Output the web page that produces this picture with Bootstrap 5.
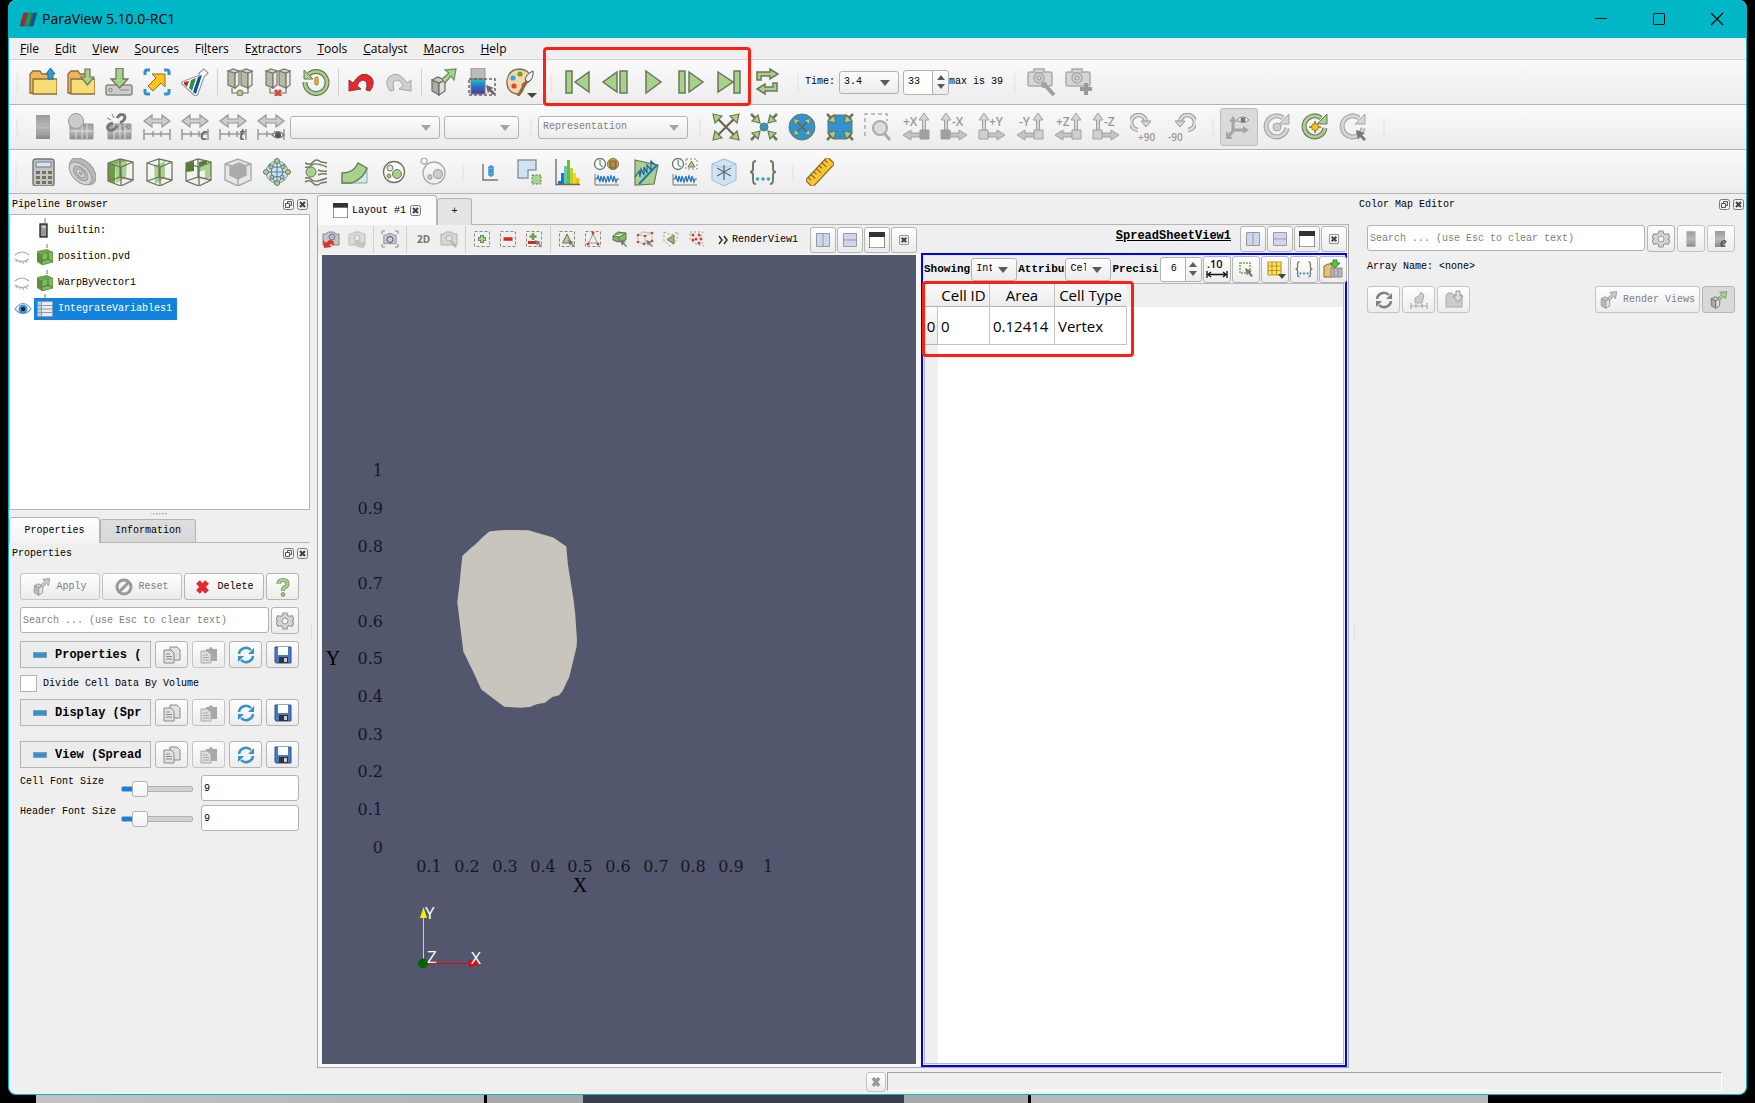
<!DOCTYPE html>
<html lang="en">
<head>
<meta charset="utf-8">
<meta name="viewport" content="width=device-width, initial-scale=1">
<title>ParaView 5.10.0-RC1</title>
<link rel="stylesheet" href="https://cdn.jsdelivr.net/npm/bootstrap@5.3.0/dist/css/bootstrap.min.css">
<style>
:root{--face:#efefef;--line:#b4b4b4;--cyan:#00b7c7}
body{font:10px/14px "Liberation Mono",monospace;color:#000;background:#000;overflow:hidden}
button,input,select{font:inherit;color:inherit}
.desk{height:100vh;padding:0 8px 8px;background:
 linear-gradient(90deg,#000 36px,#c2c2c2 36px,#b4b4b4 484px,#000 484px,#000 487px,#a8a8a8 487px,#a8a8a8 583px,#3b3c4e 583px,#3b3c4e 904px,#a9a9a9 904px,#a9a9a9 1028px,#000 1028px,#000 1031px,#b9b9b9 1031px,#b9b9b9 1488px,#000 1488px) bottom/100% 8px no-repeat #000}
.win{height:100%;background:var(--face);border:1px solid var(--cyan);border-top:0;border-radius:8px;overflow:hidden}
.titlebar{height:38px;background:var(--cyan);font:14px/20px "Open Sans",sans-serif;padding-left:10px;flex:none}
.capbtn{width:58px;height:38px;border:0;background:none;padding:0}
.menus{height:22px;flex:none;border-bottom:1px solid #d3d3d3;font:12px/20px "Open Sans",sans-serif;padding-left:3px}
.menus a{color:#000;text-decoration:none;padding:0 8px}
.bar{height:45px;flex:none;background:linear-gradient(#fafafa,#ececec);border-bottom:1px solid var(--line);padding-left:1px}
.bar.last{height:44px;padding-left:0}
.grp{display:flex;align-items:center;margin-right:5px;position:relative;flex:none}
.last .grp{margin-right:4px}
.grip{width:14px;height:18px;flex:none;background:radial-gradient(circle,#bbb 0 1px,transparent 1px) center/3px 3px;background-clip:content-box;padding:0 5px}
.tb{width:38px;height:38px;padding:0;border:1px solid transparent;background:none;border-radius:3px;display:flex;align-items:center;justify-content:center;flex:none}
.last .tb{width:39px}
.tb.down{background:#dadada;border-color:#bdbdbd}
.tb svg{width:28px;height:28px}
.vsep{width:7px;height:27px;flex:none;background:linear-gradient(#cfcfcf,#cfcfcf) center/1px 100% no-repeat}
svg{display:block;overflow:visible;flex:none}
.redbox{position:absolute;border:3px solid #ff2014;border-radius:4px;pointer-events:none;z-index:5}
.redbox.play{left:-1px;top:-16px;width:208px;height:59px}
.redbox.cells{left:-1px;top:26px;width:212px;height:76px}
.combo{appearance:none;height:23px;border:1px solid #b2b2b2;border-radius:3px;padding:0 24px 0 4px;line-height:20px;flex:none;background:linear-gradient(#fdfdfd,#ececec)}
.combox{position:relative;flex:none;display:flex}
.combox::after{content:"";position:absolute;right:9px;top:9px;border:5px solid transparent;border-top:6px solid #5a5a5a;border-bottom:0;pointer-events:none}
.combox.off::after{border-top-color:#a5a5a5}
.combo:disabled{color:#808080;opacity:1}
.w150{width:150px}.w75{width:75px}.w60{width:60px}.w46{width:46px}
.spin{position:relative;display:flex;flex:none;border:1px solid #b2b2b2;border-radius:3px;background:#fff;height:25px}
.spin input{width:28px;border:0;background:none;padding:0 4px;outline:0;border-radius:0}
.spin input.w24{width:24px;padding:0 0 0 10px}
.spin span{width:16px;border-left:1px solid #b2b2b2;background:linear-gradient(#fdfdfd,#ececec);border-radius:0 3px 3px 0;display:flex;flex-direction:column;align-items:center;justify-content:center;gap:4px}
.spin i{border:4px solid transparent;border-top:0;border-bottom:5px solid #5a5a5a}
.spin i+i{border-bottom:0;border-top:5px solid #5a5a5a}
.dock-l{width:308px;flex:none;padding-right:7px;position:relative}
.dock-r{width:397px;flex:none;padding-left:7px;position:relative}
.docktitle{height:20px;padding-left:3px;padding-right:2px;flex:none}
.docktitle>span:first-child{padding-top:2px}
.docktitle .ms-auto{display:flex;gap:3px}
.mini{padding:0;border:0;background:none;width:11px;height:11px}
.mini svg{width:11px;height:11px}
.tree{height:296px;flex:none;background:#fff;border:1px solid var(--line);margin:0;list-style:none;padding:3px 0 0;}
.tree li{height:26px;display:flex;align-items:center}
.tree .eye{width:24px;padding-left:4px}
.tree .lab{display:flex;align-items:center;height:22px;padding:0 5px 0 3px;gap:5px}
.tree .lab svg{width:16px;height:16px}
.tree .sel{background:#1283dd;color:#fff}
.hsplit{height:7px;flex:none;background:radial-gradient(circle,#bbb 0 1px,transparent 1px) center/3px 7px;background-clip:content-box;padding:0 142px}
.vsplit{position:absolute;top:430px;width:3px;height:16px;background:radial-gradient(circle,#bbb 0 1px,transparent 1px) center/3px 3px}
.tabs{height:26px;border-bottom:1px solid var(--line);display:flex;align-items:flex-end;flex:none}
.tabs.doc{height:31px;border-bottom:0;background:linear-gradient(var(--line),var(--line)) bottom/100% 1px no-repeat}
.tabx{border:1px solid var(--line);border-bottom:0;background:linear-gradient(#dedede,#d8d8d8);height:23px;width:96px;padding:0;border-radius:3px 3px 0 0}
.tabx.on{background:linear-gradient(#fff,#f3f3f3);height:26px;width:91px;margin-bottom:-1px}
.doc .tabx{height:27px;width:35px;background:#e4e4e4}
.doc .tabx.on{height:30px;width:120px;margin:0;background:#fbfbfb;display:flex;align-items:center;justify-content:center;gap:4px}
.props{padding:10px 11px 0;display:flex;flex-direction:column;gap:7px}
.pb{height:27px;border:1px solid #b5b5b5;border-radius:3px;background:linear-gradient(#fefefe,#ececec);padding:0;display:flex;align-items:center;justify-content:center;gap:5px;flex:none}
.pb:disabled{color:#808080;border-color:#c4c4c4}
.pb svg{width:18px;height:18px}
.w80{width:80px}.w33{width:33px}.w28{width:28px}.w25{width:26px;height:26px}.w105{width:105px}
.pb.down{background:#d9d9d9}
.blueic{color:#3593c6}.greyic{color:#a0a0a0}
.box{height:26px;border:1px solid #b2b2b2;border-radius:3px;background:#fff;padding:0 2px;outline:0;min-width:0}
.box::placeholder{color:#808080;opacity:1}
.head{width:131px;height:27px;border:1px solid #b5b5b5;background:#ececec;padding:0 0 0 12px;display:flex;align-items:center;gap:8px;font:bold 12px/16px "Liberation Mono",monospace;white-space:nowrap;flex:none}
.head svg{width:14px;height:6px}
.prow{display:flex;justify-content:space-between}
.prow.g2{gap:2px}
.tick{appearance:none;width:17px;height:17px;border:1px solid #b2b2b2;background:#fff;margin:0 6px 0 0}
.lbl{width:101px}
.slide{appearance:none;width:72px;height:17px;background:none;margin:5px 0 0}
.slide::-webkit-slider-runnable-track{height:6px;border:1px solid #b2b2b2;border-radius:2px;background:linear-gradient(90deg,#1283dd 12px,#d2d2d2 12px)}
.slide::-webkit-slider-thumb{appearance:none;width:16px;height:16px;margin-top:-6px;border:1px solid #b2b2b2;border-radius:3px;background:linear-gradient(#fff,#f2f2f2)}
.frame{border:1px solid #a8a8a8;border-top:0;background:#f8f8f8;min-height:0}
.viewbar{height:29px;background:var(--face);flex:none;padding-top:1px}
.ib{width:26px;height:26px;border:0;background:none;padding:0;display:flex;align-items:center;justify-content:center;flex:none}
.ib svg{width:18px;height:18px}
.viewbar .pb svg{width:16px;height:16px}
.viewbar .name{font-size:12px;line-height:20px;margin-right:9px}
.scene{background:#52576e;margin:1px 5px 3px 4px;min-height:0}
.scene svg{width:100%;height:100%}
.scene text{font:16px "DejaVu Serif",serif;fill:#16171d}
.scene .axt{font:20px "Liberation Serif",serif;fill:#000}
.scene .tri{font:17px "Open Sans",sans-serif;fill:#fff}
.sheet{width:426px;flex:none;margin-right:1px;min-height:0}
.sheet .viewbar{height:28px}
.blue{border:2px solid #00f;background:var(--face);padding:0 1px 1px;min-height:0;position:relative}
.sbar{height:28px;flex:none;gap:1px}
.sbar b{font-size:11px;flex:none}
.grid-area{border:1px solid #b9b9b9;background:linear-gradient(90deg,var(--face) 13px,#fff 13px);min-height:0}
.gridhead{background:linear-gradient(var(--face),var(--face)) top/100% 23px no-repeat}
.tbl{border-collapse:separate;border-spacing:0;font:15px/22px "Open Sans",sans-serif;background:#fff;table-layout:fixed;width:202px}
.tbl th{font-weight:400;height:23px;border-right:1px solid #c4c4c4;border-bottom:1px solid #b5b5b5;padding:0;text-align:center;background:linear-gradient(#fafafa,#ececec);white-space:nowrap}
.tbl thead th:first-child{border-right:0}
.tbl thead th:last-child{border-right-color:#efefef}
.tbl td{height:38px;border-right:1px solid #c4c4c4;border-bottom:1px solid #c4c4c4;padding:0 0 0 3px;white-space:nowrap}
.col0{width:13px}.col1{width:52px}.col2{width:65px}.col3{width:72px}
.status{height:26px;flex:none;padding:4px 24px 3px 857px}
.status .pb{width:20px;height:20px}
.status .field{border:1px solid #a2a2a2;border-right-color:#fff;border-bottom-color:#fff;margin-left:1px}
.cmap{padding:11px 11px 0}
.svgt{font-family:"Open Sans",sans-serif;font-weight:600;fill:#999}
.k{color:#a0a0a0}.kk{color:#d0d0d0}
.rs{fill:#a7d28b;stroke:#6f7558;stroke-width:1.5px}
</style>
</head>
<body>
<svg width="0" height="0" class="position-absolute" aria-hidden="true"><defs>
<linearGradient id="gg" x2="0" y2="1"><stop stop-color="#999"/><stop offset=".5" stop-color="#bbb"/><stop offset="1" stop-color="#888"/></linearGradient>
<linearGradient id="blu" x2="0" y2="1"><stop stop-color="#26c5c8"/><stop offset=".5" stop-color="#2273c4"/><stop offset="1" stop-color="#6a2f9e"/></linearGradient>
<symbol id="logo" viewBox="0 0 20 16"><path fill="#b5232f" stroke="#444" stroke-width=".6" d="M5 1h4L5 15H1z"/><path fill="#2c9a4b" stroke="#444" stroke-width=".6" d="M10 1h4l-4 14H6z"/><path fill="#11519b" stroke="#444" stroke-width=".6" d="M15 1h4l-4 14h-4z"/></symbol>
<symbol id="fold" viewBox="0 0 28 28"><g stroke="#8a6d3b" stroke-width="1.300"><path fill="#eeb560" d="M1 25V6l3-3h7l2 3h9v19z"/><path fill="#f6dd76" d="M4 11h24v15H4z"/></g></symbol>
<symbol id="open" viewBox="0 0 28 28"><use href="#fold"/><path fill="#3597d3" stroke="#1f6f9f" d="M21.500 0L26 6h-2v5h-5V6h-2z"/></symbol>
<symbol id="openg" viewBox="0 0 28 28"><use href="#fold"/><path fill="#a7d28b" stroke="#6f7558" stroke-width="1.200" d="M18 1h5v8h4l-6.500 8L14 9h4z"/></symbol>
<symbol id="save" viewBox="0 0 28 28"><rect x="1" y="17" width="26" height="10" rx="2" fill="#ccc" stroke="#888" stroke-width="1.500"/><circle cx="5.500" cy="22" r="1.500" fill="#fff" stroke="#666"/><path stroke="#888" d="M15 22h9"/><path fill="#a7d28b" stroke="#6f7558" stroke-width="1.300" d="M11 0h7v11h5l-8.500 9L6 11h5z"/></symbol>
<symbol id="extr" viewBox="0 0 28 28"><g fill="none" stroke="#2f93cf" stroke-width="3"><path d="M2 7V4q0-2 2-2h3M21 2h3q2 0 2 2v3M26 21v3q0 2-2 2h-3M7 26H4q-2 0-2-2v-3"/></g><path fill="#fcc419" stroke="#8a6d3b" d="M22 6v13l-4-4-8 8-5-5 8-8-4-4z"/></symbol>
<symbol id="flask" viewBox="0 0 28 28"><path fill="#fff" stroke="#999" stroke-width="1.200" d="M18 5l5-4 4 4-4 4-6 17q-2 3-4 1L1 16q-1-3 2-3l16-6z"/><path fill="#c1272d" d="M3 14l5-1-2 6-3-3z"/><path fill="#2b8f46" d="M10 12l5-2-4 13-3-3z"/><path fill="#11519b" d="M17 9l4-2-6 19-3-2z"/></symbol>
<symbol id="srv" viewBox="0 0 28 28"><g stroke="#77776a" stroke-width="1.200"><path fill="#b9b9aa" d="M2 3l7 2v15l-7-3zM15 3l7 2v15l-7-3z"/><path fill="#e8e8e4" d="M9 5l4-2v14l-4 3zM22 5l4-2v14l-4 3z"/><path fill="#d6d6cd" d="M2 3l5-2 6 2-4 2zM15 3l5-2 6 2-4 2z"/><path fill="none" d="M6 20v5h16v-5"/></g></symbol>
<symbol id="srvg" viewBox="0 0 28 28"><use href="#srv"/><circle cx="14" cy="25" r="3" fill="#a7d28b" stroke="#6f7558"/></symbol>
<symbol id="srvx" viewBox="0 0 28 28"><use href="#srv"/><path stroke="#d94a3c" stroke-width="3" d="M11 22l6 6M17 22l-6 6"/></symbol>
<symbol id="reset" viewBox="0 0 28 28"><path fill="none" stroke="#6f7558" stroke-width="5" d="M7 6a11 11 0 1 1-4 8"/><path fill="none" stroke="#a7d28b" stroke-width="2.600" d="M7 6a11 11 0 1 1-4 8"/><path fill="#a7d28b" stroke="#6f7558" d="M2 2v9h9z"/><rect x="13" y="9" width="3" height="8" rx="1.500" fill="#fcc419" stroke="#8a6d3b"/></symbol>
<symbol id="undo" viewBox="0 0 28 28"><path d="M2 12l4 3Q15 1 24 9q5 6-1 14l-4-1q3-9-3-10-4 0-6 6l4 3-12 2z"/></symbol>
<symbol id="cube" viewBox="0 0 28 28"><g stroke="#6b6b62" stroke-width="1.200"><path fill="#aaa" d="M2 12l7 3v12l-7-4z"/><path fill="#ddd" d="M9 15l6-3v11l-6 4z"/><path fill="#c8c8c8" d="M2 12l6-3 7 3-6 3z"/></g><path fill="#a7d28b" stroke="#6f8a58" stroke-width="1.200" d="M12 11l7-6-4-3 11-1-2 11-3-4-6 7z"/></symbol>
<symbol id="cubeg" viewBox="0 0 28 28"><g stroke="#999" stroke-width="1.400"><path fill="#bbb" d="M2 12l7 3v12l-7-4z"/><path fill="#e2e2e2" d="M9 15l6-3v11l-6 4z"/><path fill="#ccc" d="M2 12l6-3 7 3-6 3z"/><path fill="#ccc" d="M12 11l7-6-4-3 11-1-2 11-3-4-6 7z"/></g></symbol>
<symbol id="cbar" viewBox="0 0 28 28"><rect x="3" y="0" width="14" height="11" fill="#bbb" stroke="#999"/><path fill="url(#blu)" stroke="#777" d="M3 11h14v15H3z"/><path fill="none" stroke="#666" stroke-dasharray="3 2" stroke-width="1.500" d="M1 11h26v16H1z"/><path fill="#666" d="M18 17l8 3-3 1 4 4-2 2-4-4-1 3z"/></symbol>
<symbol id="pal" viewBox="0 0 28 28"><path fill="#f6d6a8" stroke="#77705c" stroke-width="1.300" d="M14 1q10 1 11 10-2 4-7 4-3 1-1 5 0 6-6 6Q0 24 1 12 3 1 14 1z"/><circle cx="14" cy="6" r="2.600" fill="#6aa13d"/><circle cx="7" cy="10" r="2.600" fill="#35a4dd"/><circle cx="8" cy="18" r="2.600" fill="#e8412d"/><path stroke="#8a6d3b" stroke-width="3" d="M21 13L12 28"/><path fill="#eee" stroke="#555" d="M27 3q1 8-5 11l-3-2q1-6 8-9z"/></symbol>
<symbol id="first" viewBox="0 0 28 28"><path d="M3 3h6v22H3zM26 4v20L12 14z"/></symbol>
<symbol id="prev" viewBox="0 0 28 28"><path d="M19 3h7v22h-7zM16 4v20L2 14z"/></symbol>
<symbol id="play" viewBox="0 0 28 28"><path d="M7 3l15 11L7 25z"/></symbol>
<symbol id="next" viewBox="0 0 28 28"><path d="M2 3h6v22H2zM12 4l14 10-14 10z"/></symbol>
<symbol id="last" viewBox="0 0 28 28"><path d="M19 3h6v22h-6zM3 4l15 10L3 24z"/></symbol>
<symbol id="loop" viewBox="0 0 28 28"><path d="M4 12V4h13V1l8 5-8 5V8H8v4zM24 15v8H12v3l-8-5 8-5v3h8v-4z"/></symbol>
<symbol id="cam" viewBox="0 0 28 28"><g fill="#d6d6d6" stroke="#aaa" stroke-width="1.500"><rect x="1" y="4" width="24" height="14" rx="2"/><path d="M7 4V1h10v3"/><circle cx="12" cy="10" r="5"/><circle cx="12" cy="10" r="2"/></g></symbol>
<symbol id="grad" viewBox="0 0 28 28"><path fill="url(#gg)" d="M7 2h14v24H7z"/><path stroke="#aaa" d="M7 9h14M7 13h14M7 17h14M7 21h14"/></symbol>
<symbol id="gradc" viewBox="0 0 28 28"><path fill="url(#gg)" stroke="#999" d="M3 11h23v15H3z"/><path stroke="#ddd" d="M9 11v15M15 11v15M20 11v15M3 18h23"/></symbol>
<symbol id="arr" viewBox="0 0 28 28"><path fill="#ccc" stroke="#999" stroke-width="1.200" d="M1 8l8-6v4h10V2l8 6-8 6v-4H9v4z"/><path stroke="#999" stroke-width="1.500" fill="none" d="M1 16v11M27 16v11M1 21h26M10 18v6M18 18v6"/></symbol>
<symbol id="fitx" viewBox="0 0 28 28"><path stroke="#666650" stroke-width="2.200" d="M4 4l20 20M24 4L4 24"/><path fill="#a7d28b" stroke="#6f7558" stroke-width="1.200" d="M1 1l9 2-7 7zM27 1l-9 2 7 7zM1 27l9-2-7-7zM27 27l-9-2 7-7z"/></symbol>
<symbol id="inar" viewBox="0 0 28 28"><path stroke="#6f7558" stroke-width="2.500" d="M1 1l5 5M27 1l-5 5M1 27l5-5M27 27l-5-5"/><path stroke="#6f7558" stroke-width="1.200" fill="#a7d28b" d="M10 10l-8-2 6-6zM18 10l8-2-6-6zM10 18l-8 2 6 6zM18 18l8 2-6 6z"/></symbol>
<symbol id="axL" viewBox="0 0 28 28"><path stroke="#a0a0a0" fill="#d6d6d6" d="M20.500 17V7H17l5-7 5 7h-3.500v10z"/><path stroke="#a0a0a0" fill="#c4c4c4" d="M18 20h-9v-3l-8 5 8 5v-3h9z"/><path fill="currentColor" stroke="#a0a0a0" d="M18 17h9v9h-9z"/></symbol>
<symbol id="axR" viewBox="0 0 28 28"><path stroke="#a0a0a0" fill="#d6d6d6" d="M4.500 17V7H1l5-7 5 7H7.500v10z"/><path stroke="#a0a0a0" fill="#c4c4c4" d="M10 20h9v-3l8 5-8 5v-3h-9z"/><path fill="currentColor" stroke="#a0a0a0" d="M1 17h9v9H1z"/></symbol>
<symbol id="rot" viewBox="0 0 28 28"><path fill="none" stroke="#999" stroke-width="4.500" d="M8 17A7.500 7.500 0 1 1 16 9"/><path fill="none" stroke="#ddd" stroke-width="2.400" d="M8 17A7.500 7.500 0 1 1 16 9"/><path fill="#d6d6d6" stroke="#999" d="M11 8h10l-5 6z"/></symbol>
<symbol id="circ" viewBox="0 0 28 28"><path fill="none" stroke="var(--o)" stroke-width="5" d="M24 15A10.500 10.500 0 1 1 20 5"/><path fill="var(--f)" stroke="var(--o)" d="M26 1v10H16z"/><path fill="none" stroke="var(--f)" stroke-width="2.800" d="M24 15A10.500 10.500 0 1 1 20 5"/></symbol>
<symbol id="calc" viewBox="0 0 28 28"><rect x="4" y="1" width="21" height="27" rx="3" fill="#c4c4c4" stroke="#777" stroke-width="1.500"/><path fill="#cfe5f5" stroke="#777" d="M7 4h15v5H7z"/><g fill="#6f7558"><path d="M7 13h4v3H7zM13 13h4v3h-4zM19 13h4v3h-4zM7 18h4v3H7zM13 18h4v3h-4zM19 18h4v3h-4zM7 23h4v3H7zM13 23h4v3h-4zM19 23h4v3h-4z"/></g></symbol>
<symbol id="cont" viewBox="0 0 28 28"><g transform="rotate(45 14 14)" stroke="#999" fill="#b8b8b8"><ellipse cx="14" cy="13" rx="16" ry="10"/><ellipse cx="14" cy="16" rx="14" ry="8" fill="#d2d2d2"/><ellipse cx="14" cy="16" rx="9" ry="5"/><ellipse cx="14" cy="16" rx="5" ry="3" fill="#ddd"/><ellipse cx="14" cy="16" rx="2" ry="1"/></g></symbol>
<symbol id="wire" viewBox="0 0 28 28"><path fill="none" stroke="#6f7558" stroke-width="1.300" d="M1 5l12-4 13 3v18l-12 6L1 23zM1 5l13 4 12-5M14 9v19M13 1v18L1 23M13 19l13 3"/></symbol>
<symbol id="clip" viewBox="0 0 28 28"><path fill="#6f9a45" d="M1 5l7 2v18l-7-2z"/><path fill="#a7d28b" d="M8 7l12-4-1 17-10 5z"/><path fill="#8ab763" d="M1 5l12-4 7 2L8 7z"/><use href="#wire"/></symbol>
<symbol id="slice" viewBox="0 0 28 28"><path fill="#a7d28b" d="M8 8l11-5v17L9 26z"/><use href="#wire"/></symbol>
<symbol id="thr" viewBox="0 0 28 28"><path fill="#527d2e" d="M1 5l8-2v10l-8 1zM14 4l8-2v6h-8z"/><path fill="#a7d28b" d="M13 9l13-5v15l-6 2v-9l-7 2z"/><use href="#wire"/></symbol>
<symbol id="sub" viewBox="0 0 28 28"><g stroke="#aaa" stroke-width="1.400"><path fill="#e6e6e6" d="M1 6l13-5 13 5v16l-13 6-13-6z"/><path fill="none" d="M1 6l13 4 13-4M14 10v18"/><path fill="#aaa" d="M6 9l9-4 7 3v9l-8 4-8-4z"/></g></symbol>
<symbol id="glyph" viewBox="0 0 28 28"><circle cx="14" cy="14" r="11" fill="#cfe3f3" stroke="#6d93b5"/><path fill="none" stroke="#4d7898" d="M2 14h24M14 2v24M6 6q8 7 16 0M6 22q8-7 16 0M8 14q1-8 6-12 5 4 6 12-1 8-6 12-5-4-6-12"/><g fill="#a7d28b" stroke="#6f7558"><circle cx="14" cy="3" r="2.500"/><circle cx="14" cy="25" r="2.500"/><circle cx="3" cy="14" r="2.500"/><circle cx="25" cy="14" r="2.500"/><circle cx="8" cy="9" r="2"/><circle cx="20" cy="9" r="2"/><circle cx="9" cy="19" r="2"/><circle cx="19" cy="19" r="2"/></g></symbol>
<symbol id="stream" viewBox="0 0 28 28"><path fill="none" stroke="#77776a" stroke-width="1.500" d="M3 5q5 3 8-1t8 0l6 1M3 9q4 1 7-2t15 2M3 20q4-1 7 2t15-2M3 24q5-3 8 1t8 0l6-1M16 12q4 2 9 1M16 17q4-2 9-1"/><circle cx="9" cy="14" r="5" fill="#a7d28b" stroke="#6f7558"/></symbol>
<symbol id="warp" viewBox="0 0 28 28"><path fill="#cfe9e4" stroke="#8aa" d="M1 17l25-7v15H1z"/><path fill="#a7d28b" stroke="#6f7558" stroke-width="1.300" d="M1 15q12 0 16-10l9 5q-3 10-15 15H1z"/></symbol>
<symbol id="group" viewBox="0 0 28 28"><circle cx="14" cy="14" r="10.500" fill="#fff" stroke="#6f7558" stroke-width="1.300"/><circle cx="10" cy="10" r="3" fill="#cfe9e4" stroke="#6f7558"/><circle cx="17" cy="16" r="4.500" fill="#a7d28b" stroke="#6f7558"/><circle cx="9" cy="18" r="2" fill="#a7d28b" stroke="#6f7558"/></symbol>
<symbol id="ext1" viewBox="0 0 28 28"><g fill="none" stroke="#aaa" stroke-width="1.300"><circle cx="15" cy="15" r="11"/><circle cx="5" cy="3" r="3"/><circle cx="19" cy="16" r="4.500" fill="#ccc"/><circle cx="11" cy="19" r="2" fill="#ccc"/></g></symbol>
<symbol id="box1" viewBox="0 0 28 28"><path fill="none" stroke="#777" stroke-width="1.400" d="M7 6v16h15"/><path fill="none" stroke="#2f8fd0" stroke-width="1.400" d="M15 7v12M13 9h4v8h-4zM13 12h4M13 14h4"/></symbol>
<symbol id="box2" viewBox="0 0 28 28"><path fill="#cfe3f3" stroke="#8a9aa5" stroke-width="1.500" d="M3 2h18v10h-8v8H3z"/><path fill="#a7d28b" stroke="#6f7558" stroke-dasharray="2 1.500" d="M17 17h9v9h-9z"/></symbol>
<symbol id="hist" viewBox="0 0 28 28"><path fill="#1878d0" d="M4 23h3v3H4zM7 15h3v11H7z"/><path fill="#62c6b8" d="M10 8h3v18h-3z"/><path fill="#6abf2b" d="M13 2h3v24h-3z"/><path fill="#b5d334" d="M16 10h3v16h-3z"/><path fill="#ffd60a" d="M19 15h3v11h-3z"/><path fill="#ffb50a" d="M22 20h3v6h-3z"/><path fill="none" stroke="#666" stroke-width="1.300" d="M2 1v25.500h24"/></symbol>
<symbol id="wave" viewBox="0 0 28 28"><path fill="none" stroke="#777" d="M2 16v11h24"/><path fill="none" stroke="#1d74bd" stroke-width="1.200" d="M2 21h2l1-3 2 6 1-6 2 6 1-6 2 6 2-6 1 6 2-6 2 6 1-6 2 6 1-3h2"/></symbol>
<symbol id="clk" viewBox="0 0 28 28"><circle cx="7" cy="6" r="5.500" fill="#fff" stroke="#6f7558" stroke-width="1.300"/><path fill="none" stroke="#1d74bd" d="M7 2v5l3 2"/></symbol>
<symbol id="plotl" viewBox="0 0 28 28"><path fill="#a7d28b" stroke="#6f7558" stroke-width="1.200" d="M3 2l23 5-4 19-19 1z"/><path stroke="#1d74bd" stroke-width="2" d="M7 26L25 7"/><path fill="none" stroke="#1a5fa5" stroke-width="1.200" d="M3 19l4-6 1 6 1-8 3 6 0-8 3 6 0-8 4 5V3l4 4"/></symbol>
<symbol id="hex" viewBox="0 0 28 28"><path fill="#cfe5f5" stroke="#a9c4d8" stroke-width="1.200" d="M2 6l12-5 12 5v16l-12 6-12-6z"/><path fill="none" stroke="#a9c4d8" d="M2 6l12 4 12-4"/><path stroke="#5a6a78" stroke-width="1.300" d="M14 7v15M7 10l14 8M21 10L7 18"/></symbol>
<symbol id="brace" viewBox="0 0 28 28"><path fill="none" stroke="#77776a" stroke-width="2" d="M7 3Q4 3 4 6v5q0 3-3 3 3 0 3 3v5q0 4 3 4M21 3q3 0 3 3v5q0 3 3 3-3 0-3 3v5q0 4-3 4"/><g fill="#3fa0d0"><circle cx="8.500" cy="21" r="1.800"/><circle cx="14" cy="21" r="1.800"/><circle cx="19.500" cy="21" r="1.800"/></g></symbol>
<symbol id="ruler" viewBox="0 0 28 28"><g transform="rotate(-47 14 14)"><rect x="-2" y="9" width="32" height="10" rx="1" fill="#fcc62b" stroke="#8a6d3b" stroke-width="1.300"/><path stroke="#6b5a2b" d="M2 9v4M6 9v6M10 9v4M14 9v6M18 9v4M22 9v6M26 9v4"/></g></symbol>
<symbol id="fl" viewBox="0 0 11 11"><rect x=".5" y=".5" width="10" height="10" rx="2" fill="#f4f4f4" stroke="#777"/><path fill="none" stroke="#555" d="M4.500 4.500v-2h4v4h-2M2.500 4.500h4v4h-4z"/></symbol>
<symbol id="cl" viewBox="0 0 11 11"><rect x=".5" y=".5" width="10" height="10" rx="2" fill="#f4f4f4" stroke="#777"/><path stroke="#444" stroke-width="2.200" d="M3 3l5 5M8 3L3 8"/></symbol>
<symbol id="gcube" viewBox="0 0 16 16"><path fill="#5f8f40" d="M0 2l5 3v11l-5-3z"/><path fill="#7dbb5c" stroke="#4f7a38" stroke-width=".7" d="M5 5l11-2v10L5 16z"/><path fill="#69a34b" d="M0 2l10-2 6 3-11 2z"/><path fill="none" stroke="#487232" d="M11 4v6l5 3M11 10l-6 2"/></symbol>
<symbol id="shut" viewBox="0 0 16 14"><path fill="none" stroke="#aaa" stroke-width="1.200" d="M1 5q7-6 14 0M1 9q7 5 14 0M3 10l-1 2M6 11v2M9 11v3M12 11l1 2"/></symbol>
<symbol id="eyeo" viewBox="0 0 18 14"><path fill="#fff" stroke="#999" stroke-width="1.200" d="M1 7q8-11 16 0-8 9-16 0z"/><circle cx="9" cy="7" r="4.500" fill="#2c9be0"/><circle cx="9" cy="7" r="2.200" fill="#06223c"/></symbol>
<symbol id="minus" viewBox="0 0 14 6"><rect x=".5" y=".5" width="13" height="5" fill="#2f93cf" stroke="#8899aa"/></symbol>
<symbol id="doc2" viewBox="0 0 18 18"><g stroke="#888" fill="#dfe3df"><path d="M7 1h7l3 3v10H7z"/><path d="M1 4h7l3 3v10H1z"/><path d="M3 8h4M3 10.500h6M3 13h6"/></g></symbol>
<symbol id="paste" viewBox="0 0 18 18"><path fill="#a8a8a8" d="M6 3h3q2-4 4 0h4v12H6z"/><path fill="#ddd" stroke="#aaa" d="M1 5h6l4 3v9H1z"/><path stroke="#aaa" d="M3 9h5M3 11.500h6M3 14h6"/></symbol>
<symbol id="sync" viewBox="0 0 18 18"><path fill="none" stroke="currentColor" stroke-width="2.500" d="M2 8a7 7 0 0 1 12-4M16 10a7 7 0 0 1-12 4"/><path fill="currentColor" d="M17 2v6h-6zM1 16v-6h6z"/></symbol>
<symbol id="disk" viewBox="0 0 18 18"><path fill="#4a7bbd" stroke="#2d5288" d="M1 1h16v16H2l-1-1z"/><path fill="#fff" d="M4 1h10v8H4z"/><path fill="#333" d="M5 11h9v6H5z"/><path fill="#ccc" d="M10 12h3v4h-3z"/></symbol>
<symbol id="gear" viewBox="0 0 18 18"><path fill="#d4d4d4" stroke="#999" stroke-width="1.200" d="M7 1h4l.6 2.400 1.800 1L16 3.700l2 3.500L16.200 9l1.800 1.800-2 3.500-2.600-.7-1.800 1L11 17H7l-.6-2.400-1.800-1-2.600.7-2-3.500L1.800 9 0 7.200l2-3.500 2.600.7 1.800-1z"/><circle cx="9" cy="9" r="3" fill="#f2f2f2" stroke="#999"/></symbol>
<symbol id="dash" viewBox="0 0 18 18"><path fill="none" stroke="#8a8a7a" stroke-dasharray="3 2" d="M1.500 1.500h15v15h-15z"/></symbol>
<symbol id="cur" viewBox="0 0 18 18"><path fill="#777" d="M10 10l6 2-2 1 3 3-1 1-3-3-1 2z"/></symbol>
<symbol id="scam" viewBox="0 0 18 18"><path fill="#c6c6c6" stroke="#888" d="M1 4h3l2-2h6l2 2h3v11H1z"/></symbol>
<symbol id="spv" viewBox="0 0 16 16"><path fill="#ccd6ee" stroke="#9a9a9a" d="M1.500 1.500h13v13h-13zM8 1v14"/></symbol>
<symbol id="sph" viewBox="0 0 16 16"><path fill="#ccd6ee" stroke="#9a9a9a" d="M1.500 1.500h13v13h-13zM1 8h14"/></symbol>
<symbol id="maxi" viewBox="0 0 16 16"><path fill="#fff" stroke="#444" stroke-width="1.200" d="M0 0h16v16H0z"/><path fill="#333" d="M0 0h16v5H0z"/></symbol>
</defs></svg>

<div class="desk">
<div class="win d-flex flex-column">
 <header class="titlebar d-flex align-items-center">
  <svg width="19" height="15" class="me-1"><use href="#logo"/></svg><span>ParaView 5.10.0-RC1</span>
  <div class="ms-auto d-flex">
   <button class="capbtn" aria-label="Minimize"><svg width="12" height="12" class="mx-auto"><path stroke="#000" d="M0 5.500h12"/></svg></button>
   <button class="capbtn" aria-label="Maximize"><svg width="12" height="12" class="mx-auto"><rect x=".5" y=".5" width="11" height="11" rx="1" fill="none" stroke="#000"/></svg></button>
   <button class="capbtn" aria-label="Close"><svg width="12" height="12" class="mx-auto"><path stroke="#000" stroke-width="1.200" d="M0 0l12 12M12 0L0 12"/></svg></button>
  </div>
 </header>
 <nav class="menus d-flex align-items-center">
  <a href="#"><u>F</u>ile</a><a href="#"><u>E</u>dit</a><a href="#"><u>V</u>iew</a><a href="#"><u>S</u>ources</a><a href="#">Fi<u>l</u>ters</a><a href="#">E<u>x</u>tractors</a><a href="#"><u>T</u>ools</a><a href="#"><u>C</u>atalyst</a><a href="#"><u>M</u>acros</a><a href="#"><u>H</u>elp</a>
 </nav>

 <div class="bar d-flex align-items-center">
  <div class="grp"><span class="grip"></span>
   <button class="tb" aria-label="Open"><svg><use href="#open"/></svg></button>
   <button class="tb" aria-label="Load state"><svg><use href="#openg"/></svg></button>
   <button class="tb" aria-label="Save data"><svg><use href="#save"/></svg></button>
   <button class="tb" aria-label="Save extracts"><svg><use href="#extr"/></svg></button>
   <button class="tb" aria-label="Catalyst"><svg><use href="#flask"/></svg></button>
   <span class="vsep"></span>
   <button class="tb" aria-label="Connect"><svg><use href="#srvg"/></svg></button>
   <button class="tb" aria-label="Disconnect"><svg><use href="#srvx"/></svg></button>
   <button class="tb" aria-label="Reset session"><svg><use href="#reset"/></svg></button>
   <span class="vsep"></span>
   <button class="tb" aria-label="Undo"><svg fill="#e8262c" stroke="#8a3a3a"><use href="#undo"/></svg></button>
   <button class="tb" aria-label="Redo"><svg fill="#d0d0d0" stroke="#a5a5a5" viewBox="0 0 28 28"><g transform="matrix(-1 0 0 1 28 0)"><use href="#undo"/></g></svg></button>
   <span class="vsep"></span>
   <button class="tb" aria-label="Auto apply"><svg><use href="#cube"/></svg></button>
   <button class="tb" aria-label="Edit color map"><svg><use href="#cbar"/></svg></button>
   <button class="tb" aria-label="Palette"><svg viewBox="0 0 28 28"><use href="#pal"/><path fill="#444" d="M21 25h10l-5 5z"/></svg></button>
  </div>
  <div class="grp"><span class="grip"></span><span class="redbox play"></span>
   <button class="tb" aria-label="First frame"><svg class="rs"><use href="#first"/></svg></button>
   <button class="tb" aria-label="Previous frame"><svg class="rs"><use href="#prev"/></svg></button>
   <button class="tb" aria-label="Play"><svg class="rs"><use href="#play"/></svg></button>
   <button class="tb" aria-label="Next frame"><svg class="rs"><use href="#next"/></svg></button>
   <button class="tb" aria-label="Last frame"><svg class="rs"><use href="#last"/></svg></button>
   <button class="tb" aria-label="Loop"><svg class="rs"><use href="#loop"/></svg></button>
  </div>
  <div class="grp"><span class="grip"></span>
   <label for="time">Time:</label>
   <span class="combox ms-1"><select id="time" class="combo w60"><option>3.4</option></select></span>
   <span class="spin ms-1"><input id="step" type="text" inputmode="numeric" value="33"><span><i></i><i></i></span></span>
   <label for="step">max is 39</label>
  </div>
  <div class="grp"><span class="grip"></span>
   <button class="tb" aria-label="Adjust camera"><svg viewBox="0 0 28 28"><use href="#cam"/><path stroke="#a0a0a0" stroke-width="4" d="M17 16l10 11"/><circle cx="17" cy="17" r="3" fill="#a0a0a0"/></svg></button>
   <button class="tb" aria-label="Add camera link"><svg viewBox="0 0 28 28"><use href="#cam"/><path stroke="#999" stroke-width="4" d="M21 15v12M15 21h12"/></svg></button>
  </div>
 </div>

 <div class="bar d-flex align-items-center">
  <div class="grp"><span class="grip"></span>
   <button class="tb" aria-label="Color legend"><svg><use href="#grad"/></svg></button>
   <button class="tb" aria-label="Edit colors"><svg viewBox="0 0 28 28"><use href="#gradc"/><circle cx="9" cy="8" r="7.500" fill="#ccc" stroke="#999"/></svg></button>
   <button class="tb" aria-label="Separate colors"><svg viewBox="0 0 28 28"><use href="#gradc"/><path fill="none" stroke="#777" stroke-width="3" d="M12 13q-5 7-9 3-2-4 5-6M12 5q3-5 7-3 3 4-4 8"/><path stroke="#777" d="M7 1l2 4M2 5l4 2M20 13l4 3M17 14l1 4"/></svg></button>
   <button class="tb" aria-label="Rescale"><svg><use href="#arr"/></svg></button>
   <button class="tb" aria-label="Rescale custom"><svg viewBox="0 0 28 28"><use href="#arr"/><text x="19" y="27" font-size="16" font-style="italic" class="svgt" style="fill:#666">c</text></svg></button>
   <button class="tb" aria-label="Rescale temporal"><svg viewBox="0 0 28 28"><use href="#arr"/><text x="20" y="27" font-size="16" font-style="italic" class="svgt" style="fill:#666">t</text></svg></button>
   <button class="tb" aria-label="Rescale visible"><svg viewBox="0 0 28 28"><use href="#arr"/><path fill="#eee" stroke="#777" stroke-width="1.200" d="M15 22q6-7 12 0-6 6-12 0z"/><circle cx="21" cy="22" r="3" fill="#555"/></svg></button>
   <span class="combox off"><select class="combo w150" disabled aria-label="Array"><option></option></select></span>
   <span class="combox off ms-1"><select class="combo w75" disabled aria-label="Component"><option></option></select></span>
  </div>
  <div class="grp"><span class="grip"></span><span class="combox off"><select class="combo w150" disabled aria-label="Representation"><option>Representation</option></select></span></div>
  <div class="grp"><span class="grip"></span>
   <button class="tb" aria-label="Reset camera"><svg><use href="#fitx"/></svg></button>
   <button class="tb" aria-label="Zoom to data"><svg viewBox="0 0 28 28"><circle cx="14" cy="14" r="4" fill="#2f93d3" stroke="#6f7558"/><use href="#inar"/></svg></button>
   <button class="tb" aria-label="Reset closest"><svg viewBox="0 0 28 28"><circle cx="14" cy="14" r="13" fill="#2f93d3" stroke="#6f7558"/><use href="#fitx" x="5" y="5" width="18" height="18"/></svg></button>
   <button class="tb" aria-label="Zoom closest"><svg viewBox="0 0 28 28"><rect x="2" y="2" width="24" height="24" rx="7" fill="#2f93d3" stroke="#6f7558"/><use href="#inar"/></svg></button>
   <button class="tb" aria-label="Zoom to box"><svg viewBox="0 0 28 28"><path fill="none" stroke="#aaa" stroke-width="1.500" stroke-dasharray="4 3" d="M1 23V1h22v7"/><circle cx="16" cy="15" r="7" fill="#ddd" stroke="#aaa" stroke-width="2"/><path stroke="#aaa" stroke-width="3" d="M20 20l6 7"/></svg></button>
   <button class="tb" aria-label="+X"><svg class="k" viewBox="0 0 28 28"><use href="#axL"/><text x="1" y="13" font-size="12" class="svgt">+X</text></svg></button>
   <button class="tb" aria-label="-X"><svg class="k" viewBox="0 0 28 28"><use href="#axR"/><text x="12" y="13" font-size="12" class="svgt">-X</text></svg></button>
   <button class="tb" aria-label="+Y"><svg class="kk" viewBox="0 0 28 28"><use href="#axR"/><text x="11" y="13" font-size="12" class="svgt">+Y</text></svg></button>
   <button class="tb" aria-label="-Y"><svg class="kk" viewBox="0 0 28 28"><use href="#axL"/><text x="3" y="13" font-size="12" class="svgt">-Y</text></svg></button>
   <button class="tb" aria-label="+Z"><svg class="kk" viewBox="0 0 28 28"><use href="#axL"/><text x="2" y="13" font-size="12" class="svgt">+Z</text></svg></button>
   <button class="tb" aria-label="-Z"><svg class="kk" viewBox="0 0 28 28"><use href="#axR"/><text x="12" y="13" font-size="12" class="svgt">-Z</text></svg></button>
   <button class="tb" aria-label="Rotate +90"><svg viewBox="0 0 28 28"><use href="#rot"/><text x="8" y="28" font-size="10" class="svgt">+90</text></svg></button>
   <button class="tb" aria-label="Rotate -90"><svg viewBox="0 0 28 28"><g transform="matrix(-1 0 0 1 28 0)"><use href="#rot"/></g><text x="0" y="28" font-size="10" class="svgt">-90</text></svg></button>
  </div>
  <div class="grp"><span class="grip"></span>
   <button class="tb down" aria-label="Orientation axes"><svg viewBox="0 0 28 28"><path fill="none" stroke="#a5a5a5" stroke-width="3" d="M8 7v11l-5 6M8 17h12"/><path fill="#a5a5a5" d="M4 9l4-6 4 6zM18 13l6 4-6 4zM1 18v8h7z"/><path fill="#fff" stroke="#888" d="M12 7q6-6 12 0-6 5-12 0z"/><circle cx="18" cy="7" r="2.500" fill="#777"/></svg></button>
   <button class="tb" aria-label="Center axes"><svg viewBox="0 0 28 28" style="--o:#a5a5a5;--f:#d6d6d6"><use href="#circ"/><circle cx="14" cy="14" r="4" fill="#d0d0d0" stroke="#a5a5a5"/></svg></button>
   <button class="tb" aria-label="Reset center"><svg viewBox="0 0 28 28" style="--o:#6f7558;--f:#a7d28b"><use href="#circ"/><path stroke="#6f7558" stroke-width="1.500" d="M14 8v12M8 14h12"/><circle cx="14" cy="14" r="3.500" fill="#fcc419" stroke="#a8781e"/></svg></button>
   <button class="tb" aria-label="Pick center"><svg viewBox="0 0 28 28" style="--o:#a5a5a5;--f:#d6d6d6"><use href="#circ"/><path fill="#777" d="M17 17l9 3-3 2 4 4-2 2-4-4-2 3z"/></svg></button>
  </div>
  <div class="grp"><span class="grip"></span></div>
 </div>

 <div class="bar last d-flex align-items-center">
  <div class="grp"><span class="grip"></span>
   <button class="tb" aria-label="Calculator"><svg><use href="#calc"/></svg></button>
   <button class="tb" aria-label="Contour"><svg><use href="#cont"/></svg></button>
   <button class="tb" aria-label="Clip"><svg><use href="#clip"/></svg></button>
   <button class="tb" aria-label="Slice"><svg><use href="#slice"/></svg></button>
   <button class="tb" aria-label="Threshold"><svg><use href="#thr"/></svg></button>
   <button class="tb" aria-label="Extract subset"><svg><use href="#sub"/></svg></button>
   <button class="tb" aria-label="Glyph"><svg><use href="#glyph"/></svg></button>
   <button class="tb" aria-label="Stream tracer"><svg><use href="#stream"/></svg></button>
   <button class="tb" aria-label="Warp"><svg><use href="#warp"/></svg></button>
   <button class="tb" aria-label="Group"><svg><use href="#group"/></svg></button>
   <button class="tb" aria-label="Extract level"><svg><use href="#ext1"/></svg></button>
  </div>
  <div class="grp"><span class="grip"></span>
   <button class="tb" aria-label="Box plot"><svg><use href="#box1"/></svg></button>
   <button class="tb" aria-label="Extract selection"><svg><use href="#box2"/></svg></button>
   <button class="tb" aria-label="Histogram"><svg><use href="#hist"/></svg></button>
   <button class="tb" aria-label="Plot over time"><svg viewBox="0 0 28 28"><use href="#wave"/><use href="#clk"/><circle cx="20" cy="6" r="5.500" fill="#e6ab2b" stroke="#6f7558"/><path fill="#a88a55" stroke="#6f5a2b" d="M17 3h6v7h-6z"/></svg></button>
   <button class="tb" aria-label="Plot over line"><svg><use href="#plotl"/></svg></button>
   <button class="tb" aria-label="Plot selection over time"><svg viewBox="0 0 28 28"><use href="#wave"/><use href="#clk"/><path fill="none" stroke="#888" stroke-dasharray="2 2" d="M15 1h11v10H15z"/><path fill="#a7d28b" stroke="#6f7558" d="M20.500 3l3.500 6h-7z"/></svg></button>
   <button class="tb" aria-label="Probe"><svg><use href="#hex"/></svg></button>
   <button class="tb" aria-label="Programmable filter"><svg><use href="#brace"/></svg></button>
  </div>
  <div class="grp"><span class="grip"></span><button class="tb" aria-label="Ruler"><svg><use href="#ruler"/></svg></button></div>
 </div>

 <main class="d-flex flex-fill" style="min-height:0">
  <aside class="dock-l d-flex flex-column">
   <div class="docktitle d-flex align-items-center"><span>Pipeline Browser</span><span class="ms-auto"><button class="mini" aria-label="Float"><svg><use href="#fl"/></svg></button><button class="mini" aria-label="Close"><svg><use href="#cl"/></svg></button></span></div>
   <ul class="tree">
    <li><span class="eye"></span><span class="lab"><svg viewBox="0 0 16 16"><path stroke="#777" d="M8-5v5"/><rect x="3" y="1" width="7" height="13" fill="#999" stroke="#111" stroke-width="1.200"/><path stroke="#fff" d="M5 4h4"/></svg>builtin:</span></li>
    <li><span class="eye"><svg width="16" height="14"><use href="#shut"/></svg></span><span class="lab"><svg viewBox="0 0 16 16"><path stroke="#777" d="M10-5v4"/><use href="#gcube"/></svg>position.pvd</span></li>
    <li><span class="eye"><svg width="16" height="14"><use href="#shut"/></svg></span><span class="lab"><svg viewBox="0 0 16 16"><path stroke="#777" d="M10-5v4"/><use href="#gcube"/></svg>WarpByVector1</span></li>
    <li><span class="eye"><svg width="18" height="14"><use href="#eyeo"/></svg></span><span class="lab sel"><svg viewBox="0 0 16 16"><path stroke="#777" d="M8-7v4"/><path fill="#e9edf2" stroke="#8d99a8" d="M.5.5h15v15H.5z"/><path fill="#c4ccd6" d="M1 1h3v14H1z"/><path stroke="#8d99a8" d="M1 4.500h14M1 8h14M1 11.500h14M4.500 1v14"/></svg>IntegrateVariables1</span></li>
   </ul>
   <div class="hsplit"></div>
   <div class="tabs"><button class="tabx on">Properties</button><button class="tabx">Information</button></div>
   <div class="docktitle d-flex align-items-center"><span>Properties</span><span class="ms-auto"><button class="mini" aria-label="Float"><svg><use href="#fl"/></svg></button><button class="mini" aria-label="Close"><svg><use href="#cl"/></svg></button></span></div>
   <div class="props">
    <div class="prow"><button class="pb w80" disabled><svg><use href="#cubeg"/></svg>Apply</button><button class="pb w80" disabled><svg viewBox="0 0 18 18"><circle cx="9" cy="9" r="7" fill="none" stroke="#999" stroke-width="3"/><path stroke="#999" stroke-width="3" d="M14 4L4 14"/></svg>Reset</button><button class="pb w80"><svg viewBox="0 0 18 18"><path stroke="#e8262c" stroke-width="5" d="M4 4l9 10M13 4L4 14"/></svg>Delete</button><button class="pb w33" aria-label="Help"><svg viewBox="0 0 18 18"><path fill="none" stroke="#6f8a58" stroke-width="4" d="M4.500 6q0-4 4.500-4t4.500 4q0 2-3 3.500Q9 10 9 13"/><path fill="none" stroke="#a7d28b" stroke-width="2.500" d="M4.500 6q0-4 4.500-4t4.500 4q0 2-3 3.500Q9 10 9 13"/><circle cx="9" cy="16.500" r="1.800" fill="#a7d28b" stroke="#6f8a58"/></svg></button></div>
    <div class="prow g2"><input class="box flex-fill" placeholder="Search ... (use Esc to clear text)" aria-label="Search properties"><button class="pb w28" aria-label="Advanced"><svg><use href="#gear"/></svg></button></div>
    <div class="prow"><button class="head"><svg><use href="#minus"/></svg>Properties (</button><button class="pb w33" aria-label="Copy"><svg><use href="#doc2"/></svg></button><button class="pb w33" disabled aria-label="Paste"><svg><use href="#paste"/></svg></button><button class="pb w33 blueic" aria-label="Restore"><svg><use href="#sync"/></svg></button><button class="pb w33" aria-label="Save"><svg><use href="#disk"/></svg></button></div>
    <div class="d-flex align-items-center"><input type="checkbox" class="tick" id="div"><label for="div">Divide Cell Data By Volume</label></div>
    <div class="prow"><button class="head"><svg><use href="#minus"/></svg>Display (Spr</button><button class="pb w33" aria-label="Copy"><svg><use href="#doc2"/></svg></button><button class="pb w33" disabled aria-label="Paste"><svg><use href="#paste"/></svg></button><button class="pb w33 blueic" aria-label="Restore"><svg><use href="#sync"/></svg></button><button class="pb w33" aria-label="Save"><svg><use href="#disk"/></svg></button></div>
    <div class="prow mt-2"><button class="head"><svg><use href="#minus"/></svg>View (Spread</button><button class="pb w33" aria-label="Copy"><svg><use href="#doc2"/></svg></button><button class="pb w33" disabled aria-label="Paste"><svg><use href="#paste"/></svg></button><button class="pb w33 blueic" aria-label="Restore"><svg><use href="#sync"/></svg></button><button class="pb w33" aria-label="Save"><svg><use href="#disk"/></svg></button></div>
    <div class="d-flex flex-column gap-1">
    <div class="d-flex"><label class="lbl" for="cf">Cell Font Size</label><input class="slide" type="range" min="0" max="36" value="7" aria-label="Cell font size"><input id="cf" class="box flex-fill ms-2" value="9" size="4"></div>
    <div class="d-flex"><label class="lbl" for="hf">Header Font Size</label><input class="slide" type="range" min="0" max="36" value="7" aria-label="Header font size"><input id="hf" class="box flex-fill ms-2" value="9" size="4"></div>
    </div>
   </div>
   <span class="vsplit end-0 me-1"></span>
  </aside>

  <section class="d-flex flex-column flex-fill" style="min-width:0">
   <div class="tabs doc"><button class="tabx on"><svg width="15" height="15"><use href="#maxi"/></svg>Layout #1<svg width="11" height="11"><use href="#cl"/></svg></button><button class="tabx">+</button></div>
   <div class="frame d-flex flex-fill">
    <div class="d-flex flex-column flex-fill" style="min-width:0">
     <div class="viewbar d-flex">
      <button class="ib" aria-label="Camera undo"><svg viewBox="0 0 18 18"><use href="#scam"/><circle cx="10" cy="7" r="3" fill="#9dc3dc" stroke="#777"/><path fill="#dd3327" d="M1 10l1 8 8-1-3-2q3-3 5 1 1-6-4-6-2 0-4 3z"/></svg></button>
      <button class="ib" aria-label="Camera redo"><svg viewBox="0 0 18 18" opacity=".5"><use href="#scam"/><circle cx="9" cy="8" r="3" fill="#ddd" stroke="#888"/><path fill="#999" d="M17 10l-1 8-8-1 3-2q-3-3-5 1-1-6 4-6 2 0 4 3z"/></svg></button>
      <span class="vsep"></span>
      <button class="ib" aria-label="Screenshot"><svg viewBox="0 0 18 18"><path fill="none" stroke="#888" d="M1 4V1h3M14 1h3v3M17 14v3h-3M4 17H1v-3"/><use href="#scam" x="2" y="2" width="14" height="14"/><circle cx="9" cy="9.500" r="3" fill="#b9d5e6" stroke="#555577"/></svg></button>
      <span class="vsep"></span>
      <button class="ib" aria-label="2D mode"><svg viewBox="0 0 18 18"><text x="3" y="13" font-size="10" class="svgt" style="fill:#77776a;font-weight:700">2D</text></svg></button>
      <button class="ib" aria-label="Adjust camera"><svg viewBox="0 0 18 18" opacity=".6"><use href="#scam"/><circle cx="9" cy="8" r="3" fill="#ddd" stroke="#888"/><path stroke="#888" stroke-width="2" d="M11 11l5 6"/></svg></button>
      <span class="vsep"></span>
      <button class="ib" aria-label="Add selection"><svg viewBox="0 0 18 18"><use href="#dash"/><path stroke="#6f8a58" stroke-width="4" d="M9 5v8M5 9h8"/><path stroke="#a7d28b" stroke-width="2" d="M9 6v6M6 9h6"/></svg></button>
      <button class="ib" aria-label="Subtract selection"><svg viewBox="0 0 18 18"><use href="#dash"/><path stroke="#d9261c" stroke-width="3.500" d="M4.500 9h9"/></svg></button>
      <button class="ib" aria-label="Toggle selection"><svg viewBox="0 0 18 18"><use href="#dash"/><path stroke="#6f9a50" stroke-width="2.500" d="M8 3v7M4.500 6.500h7"/><path stroke="#d9261c" stroke-width="3" d="M3 12.500h8"/><use href="#cur"/></svg></button>
      <span class="vsep"></span>
      <button class="ib" aria-label="Select cells"><svg viewBox="0 0 18 18"><use href="#dash"/><path fill="#a7d28b" stroke="#6f7558" d="M9 4l4.500 9h-9z"/><use href="#cur"/></svg></button>
      <button class="ib" aria-label="Select points"><svg viewBox="0 0 18 18"><use href="#dash"/><path fill="none" stroke="#999" d="M9 4l4.500 9h-9z"/><g fill="#c0492f"><circle cx="9" cy="3" r="1.500"/><circle cx="4" cy="14" r="1.500"/><circle cx="14" cy="14" r="1.500"/></g></svg></button>
      <button class="ib" aria-label="Frustum cells"><svg viewBox="0 0 18 18"><path fill="#7fb85e" stroke="#557a3d" d="M3 6l5-4 8 1v7l-8 2-5-2zM3 6l6 1 7-4M9 7v5"/><use href="#cur"/></svg></button>
      <button class="ib" aria-label="Frustum points"><svg viewBox="0 0 18 18"><path fill="none" stroke="#bbb" d="M2 5l5-3 9 1v8l-8 3-6-2zM2 5l7 1 7-3M9 6v8"/><g fill="#d2452f"><circle cx="2" cy="5" r="1.300"/><circle cx="9" cy="6" r="1.300"/><circle cx="16" cy="3" r="1.300"/><circle cx="8" cy="14" r="1.300"/><circle cx="16" cy="11" r="1.300"/><circle cx="2" cy="12" r="1.300"/></g><use href="#cur"/></svg></button>
      <button class="ib" aria-label="Polygon cells"><svg viewBox="0 0 18 18"><path fill="none" stroke="#999" stroke-dasharray="2 2" d="M2 2l7 3 7-3-1 8-7 6-6-5z"/><path fill="#8fc46d" stroke="#6f7558" d="M12 5v9L5 9.500z"/></svg></button>
      <button class="ib" aria-label="Polygon points"><svg viewBox="0 0 18 18"><path fill="none" stroke="#999" stroke-dasharray="2 2" d="M2 2h13l-3 6 4 8-8-2-6-5z"/><g fill="#c0492f"><circle cx="5" cy="5" r="1.500"/><circle cx="11" cy="5" r="1.500"/><circle cx="8" cy="9" r="1.500"/><circle cx="13" cy="9" r="1.500"/><circle cx="11" cy="13" r="1.500"/><circle cx="5" cy="10" r="1.500"/></g></svg></button>
      <div class="ms-auto d-flex align-items-center pe-1"><svg width="10" height="8" class="me-1"><path fill="none" stroke="#333" stroke-width="1.500" d="M1 0l3 4-3 4M6 0l3 4-3 4"/></svg><span class="me-2">RenderView1</span>
       <span class="d-flex ms-1" style="gap:1px"><button class="pb w25" aria-label="Split right"><svg><use href="#spv"/></svg></button><button class="pb w25" aria-label="Split down"><svg><use href="#sph"/></svg></button><button class="pb w25" aria-label="Maximize"><svg><use href="#maxi"/></svg></button><button class="pb w25" aria-label="Close view"><svg viewBox="-3 -3 17 17"><use href="#cl" width="11" height="11"/></svg></button></span></div>
     </div>
     <div class="scene flex-fill"><svg role="img" aria-label="Render view">
      <polygon fill="#c8c5bc" transform="translate(-12 185) scale(.3333 .3571)" points="460,322 485,300 492,296 517,273 538,256 570,253 600,252 655,253 730,273 769,298 774,350 791,448 796,490 801,560 800,578 778,664 757,704 747,715 727,720 705,736 680,740 660,748 630,750 583,747 514,699 493,655 460,592 448,500 442,455 450,390 457,325"/>
      <g text-anchor="end"><text x="61" y="221">1</text><text x="61" y="259">0.9</text><text x="61" y="297">0.8</text><text x="61" y="334">0.7</text><text x="61" y="372">0.6</text><text x="61" y="409">0.5</text><text x="61" y="447">0.4</text><text x="61" y="485">0.3</text><text x="61" y="522">0.2</text><text x="61" y="560">0.1</text><text x="61" y="598">0</text></g>
      <g text-anchor="middle"><text x="107" y="617">0.1</text><text x="145" y="617">0.2</text><text x="183" y="617">0.3</text><text x="221" y="617">0.4</text><text x="258" y="617">0.5</text><text x="296" y="617">0.6</text><text x="334" y="617">0.7</text><text x="371" y="617">0.8</text><text x="409" y="617">0.9</text><text x="446" y="617">1</text><text class="axt" x="258" y="637">X</text><text class="axt" x="11" y="410">Y</text></g>
      <path stroke="#e6e600" d="M101.500 708v-46"/><path fill="#f0ee00" d="M98 663l3.500-11 3.500 11z"/><path stroke="#f00000" stroke-width="1.200" d="M101 708.500h46"/><path fill="#f00000" d="M147 704.500l12 4-12 4z"/><circle cx="101" cy="708.500" r="5" fill="#006400"/>
      <text class="tri" x="103" y="664">Y</text><text class="tri" x="105" y="708">Z</text><text class="tri" x="149" y="709">X</text>
     </svg></div>
    </div>
    <div class="sheet d-flex flex-column">
     <div class="viewbar d-flex justify-content-end align-items-start">
      <b class="name text-decoration-underline">SpreadSheetView1</b>
      <span class="d-flex" style="gap:1px"><button class="pb w25" aria-label="Split right"><svg><use href="#spv"/></svg></button><button class="pb w25" aria-label="Split down"><svg><use href="#sph"/></svg></button><button class="pb w25" aria-label="Maximize"><svg><use href="#maxi"/></svg></button><button class="pb w25" aria-label="Close view"><svg viewBox="-3 -3 17 17"><use href="#cl" width="11" height="11"/></svg></button></span></div>
     <div class="blue d-flex flex-column flex-fill">
      <div class="sbar d-flex align-items-center"><b>Showing</b><span class="combox"><select class="combo w46" aria-label="Showing"><option>Int</option></select></span><b>Attribu</b><span class="combox"><select class="combo w46" aria-label="Attribute"><option>Cel</option></select></span><b>Precisi</b>
       <span class="spin"><input type="text" inputmode="numeric" value="6" aria-label="Precision" class="w24"><span><i></i><i></i></span></span>
       <span class="d-flex ms-auto" style="gap:1px"><button class="pb w28" aria-label="Fixed notation"><svg viewBox="0 0 18 18"><text x="-1" y="8" font-size="11" class="svgt" style="fill:#111">.10</text><path fill="none" stroke="#111" stroke-width="1.300" d="M-1 11v7M19 11v7M0 14.500h18M3 12l-3 2.500L3 17M15 12l3 2.500-3 2.500"/></svg></button><button class="pb w28" aria-label="Only selected"><svg viewBox="0 0 18 18"><path fill="none" stroke="#6fb04a" stroke-width="1.500" stroke-dasharray="2 1" d="M3 3h10v10H3z"/><path fill="#777" d="M8 8l7 3-2 1 3 4-2 1-3-4-1 3z"/></svg></button><button class="pb w28" aria-label="Columns"><svg viewBox="0 0 18 18"><path fill="#fbe37a" stroke="#c29a10" stroke-width="1.200" d="M2 2h13v13H2zM2 6h13M2 10.500h13M6 2v13M10.500 2v13"/><path fill="#444" d="M12 14h8l-4 5z"/></svg></button><button class="pb w28" aria-label="Connectivity"><svg><use href="#brace"/></svg></button><button class="pb w28" aria-label="Export"><svg viewBox="0 0 18 18"><path fill="#e8c07a" stroke="#8a6d3b" d="M0 17V6l4-2h4v13z"/><path fill="#bbb" stroke="#888" d="M7 8h11v9H7zM10 8v9M14 8v9"/><path fill="#5cc046" stroke="#3a8a2a" d="M9 0h4v3h3l-5 5-5-5h3z"/></svg></button></span></div>
      <div class="grid-area flex-fill"><div class="gridhead">
       <table class="tbl"><colgroup><col class="col0"><col class="col1"><col class="col2"><col class="col3"></colgroup>
        <thead><tr><th></th><th>Cell ID</th><th>Area</th><th>Cell Type</th></tr></thead>
        <tbody><tr><th>0</th><td>0</td><td>0.12414</td><td>Vertex</td></tr></tbody></table></div></div>
      <span class="redbox cells"></span>
     </div>
    </div>
   </div>
  </section>

  <aside class="dock-r">
   <div class="docktitle d-flex align-items-center"><span>Color Map Editor</span><span class="ms-auto"><button class="mini" aria-label="Float"><svg><use href="#fl"/></svg></button><button class="mini" aria-label="Close"><svg><use href="#cl"/></svg></button></span></div>
   <div class="cmap">
    <div class="prow g2"><input class="box flex-fill" placeholder="Search ... (use Esc to clear text)" aria-label="Search color map"><button class="pb w28" aria-label="Advanced"><svg><use href="#gear"/></svg></button><button class="pb w28" disabled aria-label="Save default"><svg><use href="#grad"/></svg></button><button class="pb w28" disabled aria-label="Edit default"><svg viewBox="0 0 18 18"><path fill="url(#gg)" d="M3 1h10v16H3z"/><text x="8" y="17" font-size="15" font-style="italic" class="svgt" style="fill:#555;font-family:'Liberation Serif',serif">e</text></svg></button></div>
    <div class="pt-2 pb-2 mb-1">Array Name: &lt;none&gt;</div>
    <div class="prow g2"><button class="pb w33 greyic" disabled aria-label="Rescale"><svg><use href="#sync"/></svg></button><button class="pb w33" disabled aria-label="Custom range"><svg viewBox="0 0 18 18"><path fill="none" stroke="#aaa" stroke-width="1.200" d="M1 12v6M17 12v6M1 15h16M6 13v4M12 13v4"/><path fill="#ccc" stroke="#aaa" d="M5 12V7l4-2 2-4 3 3-2 8z"/></svg></button><button class="pb w33" disabled aria-label="Presets"><svg viewBox="0 0 18 18"><path fill="#ccc" stroke="#aaa" d="M1 16V4l2-2h4l2 2h8v12z"/><path fill="#ddd" stroke="#999" d="M11 0h4v5h3l-5 6-5-6h3z"/></svg></button>
    <button class="pb w105 ms-auto" disabled><svg><use href="#cubeg"/></svg>Render Views</button><button class="pb w33 down" aria-label="Auto render"><svg><use href="#cube"/></svg></button></div>
   </div>
   <span class="vsplit start-0 ms-1"></span>
  </aside>
 </main>
 <footer class="status d-flex"><button class="pb" disabled aria-label="Abort"><svg viewBox="0 0 18 18"><path stroke="#999" stroke-width="3.500" d="M6 5l6 8M12 5l-6 8"/></svg></button><div class="field flex-fill"></div></footer>
</div>
</div>
<script src="https://cdn.jsdelivr.net/npm/bootstrap@5.3.0/dist/js/bootstrap.bundle.min.js"></script>
</body>
</html>
